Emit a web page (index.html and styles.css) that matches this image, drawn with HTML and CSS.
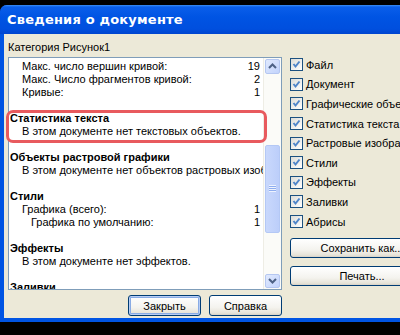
FILE: index.html
```html
<!DOCTYPE html>
<html>
  <head>
    <title>Сведения о документе</title>
    <link rel="stylesheet" href="styles.css">
  </head>
  <body>
    <div class="window">
      <div class="title-bar">Сведения о документе</div>
      <div class="content">
        <div class="left-col">
          <p class="category">Категория Рисунок1</p>
          <div class="list-wrap">
            <div class="list-box">
              <div class="list-text">
                <div class="row item"><span>Макс. число вершин кривой:</span><span class="value">19</span></div>
                <div class="row item"><span>Макс. Число фрагментов кривой:</span><span class="value">2</span></div>
                <div class="row item"><span>Кривые:</span><span class="value">1</span></div>
                <div class="row"></div>
                <div class="row heading">Статистика текста</div>
                <div class="row item">В этом документе нет текстовых объектов.</div>
                <div class="row"></div>
                <div class="row heading">Объекты растровой графики</div>
                <div class="row item">В этом документе нет объектов растровых изображений.</div>
                <div class="row"></div>
                <div class="row heading">Стили</div>
                <div class="row item"><span>Графика (всего):</span><span class="value">1</span></div>
                <div class="row item sub"><span>Графика по умолчанию:</span><span class="value">1</span></div>
                <div class="row"></div>
                <div class="row heading">Эффекты</div>
                <div class="row item">В этом документе нет эффектов.</div>
                <div class="row"></div>
                <div class="row heading">Заливки</div>
              </div>
              <div class="scrollbar">
                <div class="scroll-btn">
                  <svg width="9" height="6" viewBox="0 0 9 6"><path d="M1 5 L4.5 1.5 L8 5" fill="none" stroke="#4d6185" stroke-width="2"/></svg>
                </div>
                <div class="scroll-track">
                  <div class="scroll-thumb"><span class="grip"></span></div>
                </div>
                <div class="scroll-btn">
                  <svg width="9" height="6" viewBox="0 0 9 6"><path d="M1 1 L4.5 4.5 L8 1" fill="none" stroke="#4d6185" stroke-width="2"/></svg>
                </div>
              </div>
            </div>
            <div class="highlight"></div>
          </div>
          <div class="bottom-buttons">
            <button class="xp-button default">Закрыть</button>
            <button class="xp-button">Справка</button>
          </div>
        </div>
        <div class="right-col">
          <div class="check-row"><span class="checkbox"><svg width="9" height="9" viewBox="0 0 9 9"><path d="M1.5 4 L3.5 6.5 L7.5 1.5" fill="none" stroke="#4f85c9" stroke-width="2"/></svg></span>Файл</div>
          <div class="check-row"><span class="checkbox"><svg width="9" height="9" viewBox="0 0 9 9"><path d="M1.5 4 L3.5 6.5 L7.5 1.5" fill="none" stroke="#4f85c9" stroke-width="2"/></svg></span>Документ</div>
          <div class="check-row"><span class="checkbox"><svg width="9" height="9" viewBox="0 0 9 9"><path d="M1.5 4 L3.5 6.5 L7.5 1.5" fill="none" stroke="#4f85c9" stroke-width="2"/></svg></span>Графические объекты</div>
          <div class="check-row"><span class="checkbox"><svg width="9" height="9" viewBox="0 0 9 9"><path d="M1.5 4 L3.5 6.5 L7.5 1.5" fill="none" stroke="#4f85c9" stroke-width="2"/></svg></span>Статистика текста</div>
          <div class="check-row"><span class="checkbox"><svg width="9" height="9" viewBox="0 0 9 9"><path d="M1.5 4 L3.5 6.5 L7.5 1.5" fill="none" stroke="#4f85c9" stroke-width="2"/></svg></span>Растровые изображения</div>
          <div class="check-row"><span class="checkbox"><svg width="9" height="9" viewBox="0 0 9 9"><path d="M1.5 4 L3.5 6.5 L7.5 1.5" fill="none" stroke="#4f85c9" stroke-width="2"/></svg></span>Стили</div>
          <div class="check-row"><span class="checkbox"><svg width="9" height="9" viewBox="0 0 9 9"><path d="M1.5 4 L3.5 6.5 L7.5 1.5" fill="none" stroke="#4f85c9" stroke-width="2"/></svg></span>Эффекты</div>
          <div class="check-row"><span class="checkbox"><svg width="9" height="9" viewBox="0 0 9 9"><path d="M1.5 4 L3.5 6.5 L7.5 1.5" fill="none" stroke="#4f85c9" stroke-width="2"/></svg></span>Заливки</div>
          <div class="check-row"><span class="checkbox"><svg width="9" height="9" viewBox="0 0 9 9"><path d="M1.5 4 L3.5 6.5 L7.5 1.5" fill="none" stroke="#4f85c9" stroke-width="2"/></svg></span>Абрисы</div>
          <button class="xp-button side save">Сохранить как...</button>
          <button class="xp-button side print">Печать...</button>
        </div>
      </div>
    </div>
  </body>
</html>
```

FILE: styles.css
```css
body {
    margin: 0;
    width: 400px;
    height: 335px;
    overflow: hidden;
    background-color: #000000;
    font-family: "Liberation Sans", Arial, sans-serif;
    font-size: 11px;
    color: #000000;
}
.window {
    margin-top: 5px;
    width: 440px;
    background-color: #0054e3;
    border-radius: 7px 7px 0 0;
    padding: 0 4px 4px 4px;
    box-sizing: border-box;
}
.title-bar {
    height: 29px;
    margin: 0 -4px;
    padding-left: 7px;
    border-radius: 7px 7px 0 0;
    background: linear-gradient(#3d8ff5 0, #0a5eea 2px, #0054e3 12px, #004fde 24px, #0045cf 29px);
    color: white;
    font-family: "DejaVu Sans", sans-serif;
    font-weight: bold;
    font-size: 13px;
    line-height: 29px;
    letter-spacing: 0.2px;
}
.content {
    height: 284px;
    background-color: #ece9d8;
    display: flex;
    padding: 6px 0 0 4px;
    box-sizing: border-box;
}
.left-col {
    width: 274px;
}
.category {
    margin: 0;
    height: 14px;
    line-height: 14px;
}
.list-wrap {
    position: relative;
    margin-top: 3px;
}
.list-box {
    height: 233px;
    border: 1px solid #7f9db9;
    background-color: white;
    box-sizing: border-box;
    display: flex;
    overflow: hidden;
}
.list-text {
    flex: 1;
    padding-top: 2px;
    overflow: hidden;
    white-space: nowrap;
}
.row {
    height: 13px;
    line-height: 13px;
    padding-left: 1px;
}
.item {
    display: flex;
    padding-left: 13px;
    padding-right: 3px;
}
.item.sub {
    padding-left: 22px;
}
.value {
    margin-left: auto;
}
.heading {
    font-weight: bold;
}
.scrollbar {
    width: 17px;
    display: flex;
    flex-direction: column;
    background-color: #fbfbf8;
    border-left: 1px solid #eeede5;
}
.scroll-btn {
    height: 16px;
    margin: 1px 1px;
    border: 1px solid #b5c7f1;
    border-radius: 2px;
    background: linear-gradient(135deg, #e1eafe, #c2d3fc);
    box-sizing: border-box;
    display: flex;
    align-items: center;
    justify-content: center;
}
.scroll-track {
    flex: 1;
    padding-top: 70px;
    padding-bottom: 40px;
}
.scroll-thumb {
    height: 86px;
    margin: 0 1px;
    border: 1px solid #b4c8f5;
    border-radius: 2px;
    background: linear-gradient(90deg, #c9d8fc, #bccefa);
    display: flex;
    align-items: center;
    justify-content: center;
}
.grip {
    width: 7px;
    height: 7px;
    background: repeating-linear-gradient(#eef3fe 0, #eef3fe 1px, #8faeef 1px, #8faeef 2px);
}
.highlight {
    position: absolute;
    left: -2px;
    top: 53px;
    width: 261px;
    height: 33px;
    border: 3px solid #e85a5e;
    border-radius: 7px;
    box-sizing: border-box;
}
.bottom-buttons {
    display: flex;
    gap: 8px;
    padding-left: 120px;
    margin-top: 5px;
}
.xp-button {
    width: 73px;
    height: 21px;
    border: 1px solid #003c74;
    border-radius: 3px;
    background: linear-gradient(#ffffff, #f4f3ee 60%, #e6e3d8 90%, #d6d0c5);
    font-family: "Liberation Sans", Arial, sans-serif;
    font-size: 11px;
    color: #000000;
    padding: 0;
}
.xp-button.default {
    box-shadow: inset 0 0 0 1px #b7cdf5, inset 0 0 0 2px #89abe4;
}
.right-col {
    margin-left: 8px;
    padding-top: 15px;
    display: flex;
    flex-direction: column;
    white-space: nowrap;
}
.check-row {
    height: 19.6px;
    display: flex;
    align-items: center;
}
.checkbox {
    width: 13px;
    height: 13px;
    border: 1px solid #1c5180;
    box-sizing: border-box;
    background: linear-gradient(135deg, #dcdcd7, #ffffff);
    margin-right: 3px;
    display: flex;
    align-items: center;
    justify-content: center;
}
.xp-button.side {
    width: 144px;
    height: 20px;
}
.save {
    margin-top: 7px;
}
.print {
    margin-top: 8px;
}
```
